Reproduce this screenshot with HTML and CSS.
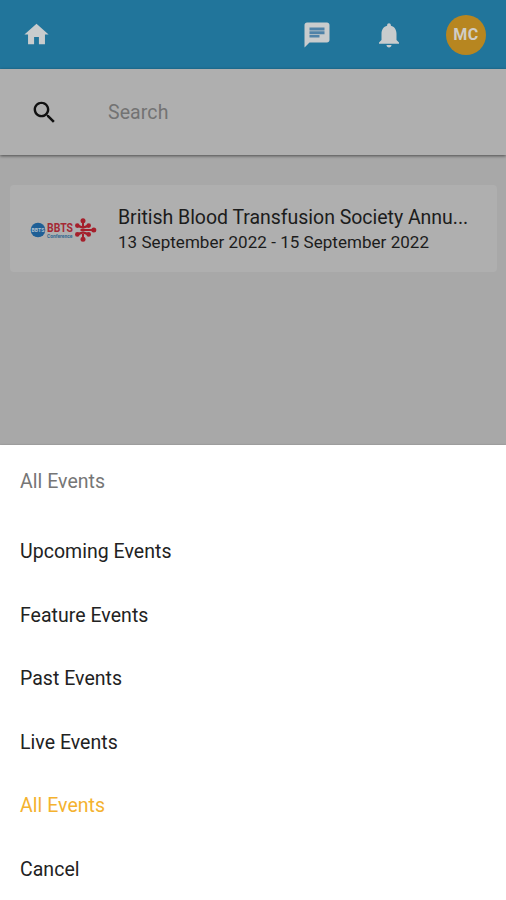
FILE: index.html
```html
<!DOCTYPE html>
<html lang="en">
<head>
<meta charset="utf-8">
<title>Events</title>
<link rel="stylesheet" href="styles.css">
</head>
<body>
<div class="app">
  <header class="topbar">
    <svg class="icon-home" viewBox="0 0 24 24"><path d="M10 20v-6h4v6h5v-8h3L12 3 2 12h3v8z"/></svg>
    <svg class="icon-chat" viewBox="0 0 24 24"><path d="M20 2H4c-1.100 0-2 .9-2 2v18l4-4h14c1.100 0 2-.9 2-2V4c0-1.100-.9-2-2-2z"/><path class="lines" d="M6 6h12v2.400H6zM6 9h12v2.400H6zM6 12h8v2H6z"/></svg>
    <svg class="icon-bell" viewBox="0 0 24 24"><path d="M12 22c1.100 0 2-.9 2-2h-4c0 1.100.9 2 2 2zm6-6v-5c0-3.070-1.640-5.640-4.500-6.320V4c0-.83-.67-1.500-1.500-1.500s-1.500.67-1.500 1.500v.68C7.630 5.360 6 7.920 6 11v5l-2 2v1h16v-1l-2-2z"/></svg>
    <div class="avatar">MC</div>
  </header>
  <div class="search">
    <svg class="icon-search" viewBox="0 0 24 24"><path d="M15.500 14h-.79l-.28-.27C15.410 12.590 16 11.110 16 9.500 16 5.910 13.090 3 9.500 3S3 5.910 3 9.500 5.910 16 9.500 16c1.610 0 3.090-.59 4.230-1.570l.27.28v.79l5 4.990L20.490 19l-4.990-5zm-6 0C7.010 14 5 11.990 5 9.500S7.010 5 9.500 5 14 7.010 14 9.500 11.990 14 9.500 14z"/></svg>
    <span class="placeholder">Search</span>
  </div>
  <main class="content">
    <article class="card">
      <svg class="logo" viewBox="0 0 68 26">
        <circle class="blue" cx="8" cy="13" r="7.300"/>
        <text class="logo-seal" x="1.500" y="15.200" textLength="13" lengthAdjust="spacingAndGlyphs">BBTS</text>
        <text class="logo-name" x="17" y="14.500" textLength="26" lengthAdjust="spacingAndGlyphs">BBTS</text>
        <text class="logo-sub" x="17" y="21" textLength="25.500" lengthAdjust="spacingAndGlyphs">Conference</text>
        <g class="red">
          <circle cx="53" cy="3.800" r="2.500"/><circle cx="53" cy="22.200" r="2.500"/>
          <circle cx="47.300" cy="8.600" r="2.300"/><circle cx="58.700" cy="8.600" r="2.300"/>
          <circle cx="47.300" cy="17.400" r="2.300"/><circle cx="58.700" cy="17.400" r="2.300"/>
          <circle cx="63.800" cy="13" r="2.500"/>
          <path d="M50.500 12h13v2h-13zM52 4h2v5.500h-2zM52 16.500h2V22h-2zM48 7.500l5 2L58 7.500v2.800l-5 1.400-5-1.400zM48 18.500l5-2 5 2v-2.800l-5-1.400-5 1.400z"/>
        </g>
      </svg>
      <div class="info">
        <div class="title">British Blood Transfusion Society Annu...</div>
        <div class="dates">13 September 2022 - 15 September 2022</div>
      </div>
    </article>
  </main>
  <section class="sheet">
    <div class="sheet-title">All Events</div>
    <div class="option">Upcoming Events</div>
    <div class="option">Feature Events</div>
    <div class="option">Past Events</div>
    <div class="option">Live Events</div>
    <div class="option selected">All Events</div>
    <div class="option">Cancel</div>
  </section>
</div>
</body>
</html>
```
FILE: styles.css
```css
* { box-sizing: border-box; }
body { margin: 0; font-family: Roboto, sans-serif; }
svg { display: block; flex: none; }
.app { display: flex; flex-direction: column; width: 506px; height: 900px; overflow: hidden; background: #a8a8a8; }
.topbar { display: flex; align-items: center; height: 69px; padding: 0 20px 0 22px; background: #21759b; fill: #c9cccd; }
.icon-home { width: 29px; height: 29px; }
.icon-chat { width: 30px; height: 30px; margin-left: auto; }
.icon-chat .lines { fill: #4f82a8; }
.icon-bell { width: 30px; height: 30px; margin-left: 42px; }
.avatar { width: 40px; height: 40px; margin-left: 42px; border-radius: 50%; background: #b78620; color: #d0cdc5; font-size: 16px; font-weight: 700; line-height: 40px; text-align: center; letter-spacing: .5px; }
.search { display: flex; align-items: center; height: 86px; padding-left: 30px; background: #afafaf; box-shadow: 0 1px 3px rgba(0,0,0,.55); }
.icon-search { width: 29px; height: 29px; fill: #111; }
.placeholder { margin-left: 49px; font-size: 19.500px; letter-spacing: .1px; color: #737373; }
.content { flex: 1; padding: 30px 9px 0 10px; }
.card { display: flex; align-items: center; height: 87px; padding-left: 20px; border-radius: 4px; background: #afafaf; }
.logo { width: 68px; height: 26px; margin-top: 2px; }
.blue { fill: #1e5f96; }
.red { fill: #a51f2b; }
.logo-seal { fill: #aebfcc; font: 700 5px Roboto, sans-serif; }
.logo-name { fill: #a52a35; font: 700 13px Roboto, sans-serif; }
.logo-sub { fill: #32688f; font: 700 5px Roboto, sans-serif; }
.info { margin-left: 20px; color: #1c1c1c; white-space: nowrap; }
.title { padding-top: 2px; font-size: 19.500px; line-height: 26px; letter-spacing: -.03px; }
.dates { font-size: 17px; line-height: 23px; letter-spacing: .04px; }
.sheet { height: 455px; background: #fff; color: #222; font-size: 19.500px; letter-spacing: .03px; box-shadow: 0 0 2px rgba(0,0,0,.2); }
.sheet-title { height: 75px; padding-left: 20px; line-height: 73px; color: #767676; }
.option { height: 63.600px; padding-left: 20px; line-height: 63.600px; }
.selected { color: #f4b22f; }
```
